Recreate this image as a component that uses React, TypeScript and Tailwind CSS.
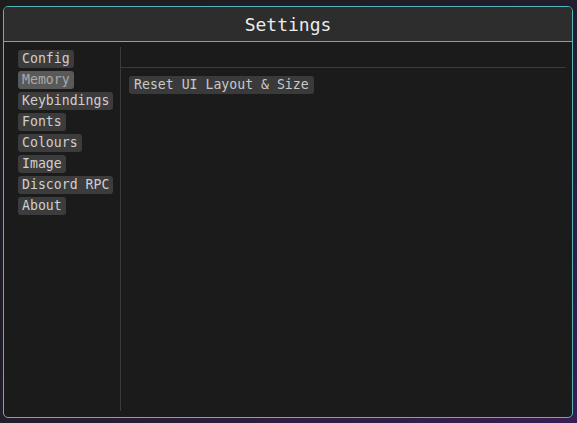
const tabs = ['Config', 'Memory', 'Keybindings', 'Fonts', 'Colours', 'Image', 'Discord RPC', 'About'];

export default function App() {
  const active = 'Memory';

  return (
    <div
      className="flex h-[423px] w-[577px] bg-gradient-to-br from-[#1d1d1d] via-[#231c2c] to-[#3a1c54] pb-[5px] pl-[3px] pr-[4px] pt-[6px]"
      style={{ fontFamily: '"DejaVu Sans Mono", "Liberation Mono", monospace' }}
    >
      <div className="flex flex-1 flex-col overflow-hidden rounded-[5px] border border-[#56b6bb] bg-[#1b1b1b]">
        <div className="flex h-[35px] shrink-0 items-center justify-center border-b border-[#56b6bb] bg-[#2d2d2d] text-[18px] text-[#ececec]">
          Settings
        </div>
        <div className="flex flex-1 pb-[6px] pr-[6px] pt-[5px]">
          <div className="flex w-[116px] shrink-0 flex-col items-start gap-[3px] pl-[14px] pt-[3px]">
            {tabs.map((tab) => (
              <button
                key={tab}
                type="button"
                className={
                  tab === active
                    ? 'h-[18px] rounded-[3px] bg-[#595959] px-[4px] text-[13.2px] leading-[18px] text-[#a9a9a9]'
                    : 'h-[18px] rounded-[3px] bg-[#3c3c3c] px-[4px] text-[13.2px] leading-[18px] text-[#cfcfcf]'
                }
              >
                {tab}
              </button>
            ))}
          </div>
          <div className="w-px shrink-0 bg-[#3b3b3b]" />
          <div className="flex flex-1 flex-col">
            <div className="h-[21px] shrink-0 border-b border-[#3b3b3b]" />
            <div className="flex items-start pl-[8px] pt-[8px]">
              <button
                type="button"
                className="h-[18px] rounded-[3px] bg-[#3a3a3a] px-[5px] text-[13.2px] leading-[18px] text-[#c9c9c9]"
              >
                Reset UI Layout &amp; Size
              </button>
            </div>
          </div>
        </div>
      </div>
    </div>
  );
}
